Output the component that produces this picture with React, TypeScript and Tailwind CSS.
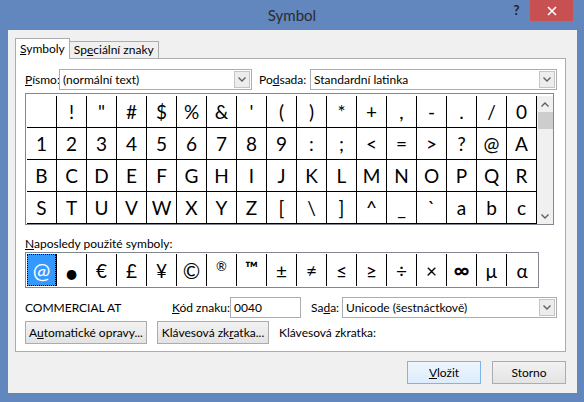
import React from "react";

const ui = { fontFamily: 'Lato, "Noto Sans", sans-serif' };
const sym = { fontFamily: 'Lato, "Noto Sans", sans-serif' };

function Chevron({ up }: { up?: boolean }) {
  return (
    <svg width="8" height="5" viewBox="0 0 8 5">
      <path
        d={up ? "M0.5 4.5 L4 1 L7.5 4.5" : "M0.5 0.5 L4 4 L7.5 0.5"}
        fill="none"
        stroke="#606060"
        strokeWidth="1.4"
      />
    </svg>
  );
}

function Combo({ text, cls }: { text: string; cls: string }) {
  return (
    <div className={`flex h-[21px] shrink-0 border border-[#abadb3] bg-white ${cls}`}>
      <div className="flex flex-1 items-center whitespace-nowrap pl-[3px] text-[12px] leading-none text-black">{text}</div>
      <div className="m-px flex w-[16px] items-center justify-center border border-[#c5c5c5] bg-[#ededed]">
        <Chevron />
      </div>
    </div>
  );
}

function Btn({ children, cls }: { children: React.ReactNode; cls: string }) {
  return (
    <div
      className={`flex h-[23px] shrink-0 items-center justify-center whitespace-nowrap border border-[#acacac] bg-gradient-to-b from-[#f2f2f2] to-[#e3e3e3] text-[12px] text-black ${cls}`}
    >
      {children}
    </div>
  );
}

const rows: string[][] = [
  ["", "!", '"', "#", "$", "%", "&", "'", "(", ")", "*", "+", ",", "-", ".", "/", "0"],
  ["1", "2", "3", "4", "5", "6", "7", "8", "9", ":", ";", "<", "=", ">", "?", "@", "A"],
  ["B", "C", "D", "E", "F", "G", "H", "I", "J", "K", "L", "M", "N", "O", "P", "Q", "R"],
  ["S", "T", "U", "V", "W", "X", "Y", "Z", "[", "\\", "]", "^", "_", "`", "a", "b", "c"],
];

const recent = ["@", "•", "€", "£", "¥", "©", "®", "™", "±", "≠", "≤", "≥", "÷", "×", "∞", "µ", "α"];

export default function App() {
  return (
    <div className="flex h-[402px] w-[584px] flex-col bg-[#6286be]" style={ui}>
      {/* Title bar */}
      <div className="flex h-[30px] items-start">
        <div className="flex h-[30px] flex-1 items-center justify-center pl-[76px] text-[15px] text-[#2b2b2b]">
          Symbol
        </div>
        <div className="mr-[5px] flex h-[21px] w-[17px] items-center justify-center text-[13px] font-bold text-[#1e1e1e]">?</div>
        <div className="mr-[11px] flex h-[21px] w-[43px] items-center justify-center bg-[#c75050]">
          <svg width="10" height="10" viewBox="0 0 10 10">
            <path d="M1 1 L9 9 M9 1 L1 9" stroke="white" strokeWidth="1.6" />
          </svg>
        </div>
      </div>

      {/* Client */}
      <div className="mb-[9px] ml-[8px] mr-[7px] flex flex-1 flex-col bg-[#f0f0f0] pb-[8px] pl-[7px] pt-[8px]">
        {/* Tabs */}
        <div className="flex h-[20px] items-end whitespace-nowrap text-[12px] text-black">
          <div className="relative z-10 -mb-px flex h-[21px] items-center border border-b-0 border-[#acacac] bg-white px-[4px]">
            <span>
              <u>S</u>ymboly
            </span>
          </div>
          <div className="flex h-[17px] items-center border border-b-0 border-l-0 border-[#acacac] bg-[#f0f0f0] px-[4px]">
            <span>
              Sp<u>e</u>ciální znaky
            </span>
          </div>
        </div>

        {/* Panel */}
        <div className="mr-[11px] flex flex-col whitespace-nowrap border border-[#acacac] bg-white pb-[7px] pl-[9px] pr-[8px] pt-[10px] text-[12px] text-black">
          {/* Font row */}
          <div className="flex items-center">
            <span className="w-[34px] shrink-0">
              <u>P</u>ísmo:
            </span>
            <Combo text="(normální text)" cls="w-[193px]" />
            <span className="ml-[7px] w-[51px] shrink-0">
              Po<u>d</u>sada:
            </span>
            <Combo text="Standardní latinka" cls="flex-1" />
          </div>

          {/* Grid */}
          <div className="mt-[3px] flex w-[529px] border border-[#828790] bg-white pl-px pt-[2px]" style={sym}>
            <div className="grid grid-cols-[repeat(17,30px)]">
              {rows.flat().map((c, i) => (
                <div
                  key={i}
                  className="flex h-[32px] items-center justify-center border-b border-r border-black text-[19px] leading-none text-black"
                >
                  {c}
                </div>
              ))}
            </div>
            <div className="flex w-[16px] flex-col items-center bg-[#f0f0f0]">
              <div className="flex h-[16px] w-full items-center justify-center">
                <Chevron up />
              </div>
              <div className="h-[17px] w-[15px] bg-[#cdcdcd]" />
              <div className="flex-1" />
              <div className="flex h-[16px] w-full items-center justify-center">
                <Chevron />
              </div>
            </div>
          </div>

          {/* Recent */}
          <div className="mt-[11px] h-[16px] leading-[16px]">
            <u>N</u>aposledy použité symboly:
          </div>
          <div className="flex h-[36px] w-[514px] items-center border border-[#828790] bg-white pl-px" style={sym}>
            {recent.map((c, i) =>
              i === 0 ? (
                <div
                  key={i}
                  className="flex h-[32px] w-[30px] items-center justify-center border-r border-black"
                >
                  <div className="flex h-[32px] w-[29px] items-center justify-center border border-dotted border-black bg-[#3399ff] text-[21px] leading-none text-white">
                    @
                  </div>
                </div>
              ) : (
                <div
                  key={i}
                  className={`flex h-[32px] w-[30px] items-center justify-center text-[19px] leading-none text-black ${
                    i < 16 ? "border-r border-black" : ""
                  }`}
                >
                  {c === "•" ? (
                    <span className="mt-[6px] text-[26px]">•</span>
                  ) : c === "®" ? (
                    <span className="-mt-[8px] text-[13px]">®</span>
                  ) : c === "™" ? (
                    <span className="-mt-[6px] text-[17px] font-bold">™</span>
                  ) : c === "©" ? (
                    <span className="text-[21px]">©</span>
                  ) : c === "∞" ? (
                    <span className="text-[22px] font-bold">∞</span>
                  ) : (
                    c
                  )}
                </div>
              )
            )}
          </div>

          {/* Info row */}
          <div className="mt-[9px] flex h-[21px] items-center">
            <span className="w-[147px] shrink-0">COMMERCIAL AT</span>
            <span className="w-[58px] shrink-0">
              <u>K</u>ód znaku:
            </span>
            <div className="flex h-[21px] w-[71px] shrink-0 items-center border border-[#abadb3] bg-white pl-[3px]">0040</div>
            <span className="ml-[10px] w-[31px] shrink-0">
              Sa<u>d</u>a:
            </span>
            <Combo text="Unicode (šestnáctkově)" cls="flex-1" />
          </div>

          {/* Buttons row */}
          <div className="mt-[3px] flex items-center">
            <Btn cls="w-[122px]">
              <span>
                A<u>u</u>tomatické opravy...
              </span>
            </Btn>
            <Btn cls="ml-[10px] w-[112px]">
              <span>
                Klávesová zk<u>r</u>atka...
              </span>
            </Btn>
            <span className="ml-[10px]">Klávesová zkratka:</span>
          </div>
        </div>

        {/* Dialog buttons */}
        <div className="mr-[11px] mt-[9px] flex justify-end gap-[11px]">
          <div className="flex h-[23px] w-[74px] items-center justify-center border border-[#7eb4ea] bg-gradient-to-b from-[#eef6fd] to-[#dcecfc] text-[12px] text-black">
            <span>
              <u>V</u>ložit
            </span>
          </div>
          <Btn cls="w-[74px]">Storno</Btn>
        </div>
      </div>
    </div>
  );
}
